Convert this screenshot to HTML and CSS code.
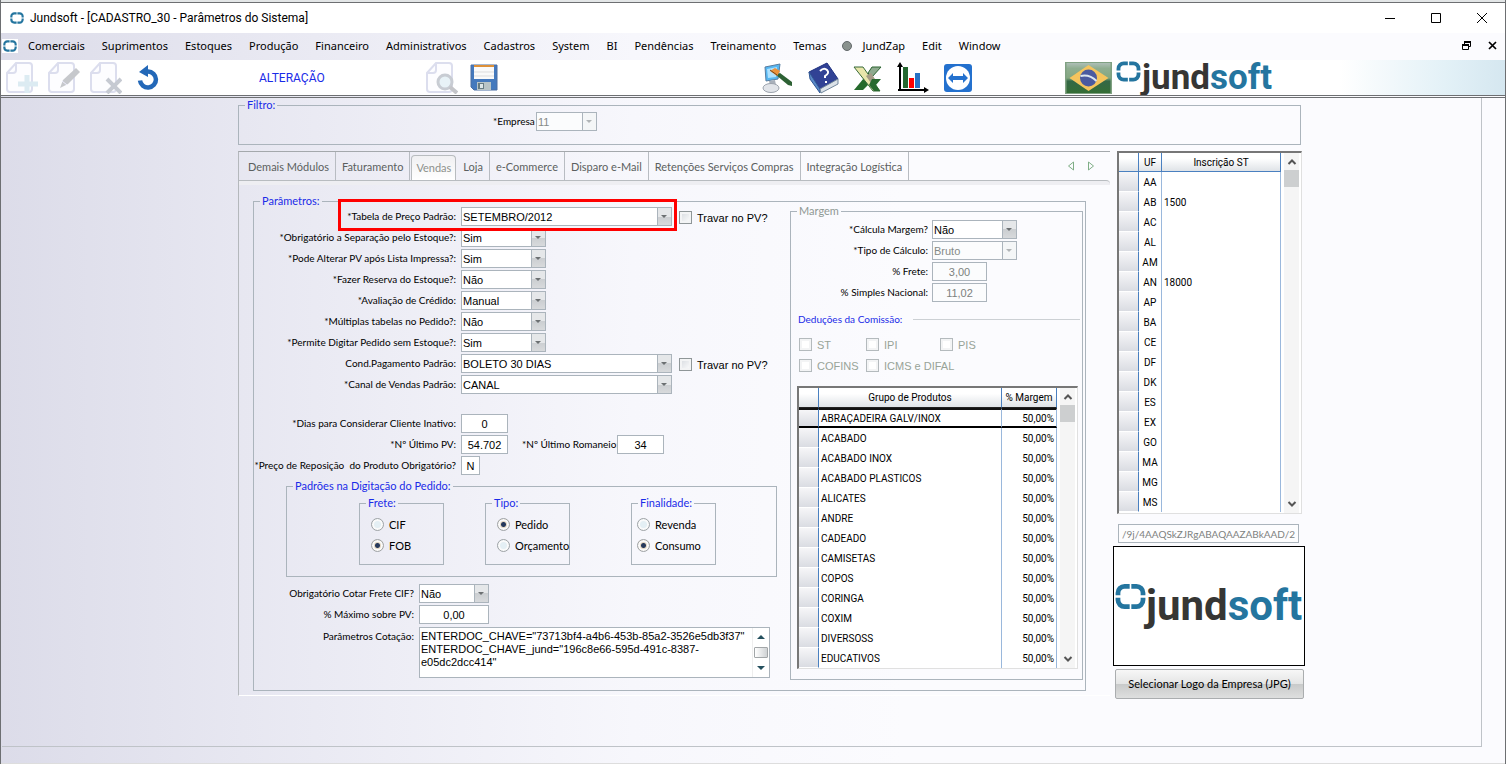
FILE: index.html
```html
<!DOCTYPE html>
<html lang="pt-BR">
<head>
<meta charset="utf-8">
<title>Jundsoft - [CADASTRO_30 - Parâmetros do Sistema]</title>
<link rel="stylesheet" href="styles.css">
</head>
<body>
<svg class="defs" aria-hidden="true">
  <defs>
    <symbol id="ring" viewBox="0 0 26 22"><path d="M2.500 10V8a5.500 5.500 0 0 1 5.500-5.500h4.300M13.700 2.500H18A5.500 5.500 0 0 1 23.500 8v2M23.500 12v2a5.500 5.500 0 0 1-5.500 5.500h-4.300M12.300 19.500H8A5.500 5.500 0 0 1 2.500 14v-2" fill="none" stroke="#24759f" stroke-width="4"/></symbol>
    <symbol id="page" viewBox="0 0 32 32"><path d="M10 1h13q3 0 3 3v23q0 3-3 3H4q-3 0-3-3V11zM10 2v6q0 3-3 3H2" fill="#fdfdff" stroke="#dcdeee" stroke-width="2"/></symbol>
    <symbol id="up" viewBox="0 0 10 10"><path d="M1.500 7L5 3.500L8.500 7" fill="none" stroke="#555" stroke-width="2"/></symbol>
    <symbol id="down" viewBox="0 0 10 10"><path d="M1.500 3L5 6.500L8.500 3" fill="none" stroke="#555" stroke-width="2"/></symbol>
  </defs>
</svg>
<div class="window">
  <div class="strip"></div>
  <header class="titlebar">
    <svg class="mark"><use href="#ring"/></svg>
    <h1>Jundsoft - [CADASTRO_30 - Parâmetros do Sistema]</h1>
    <button class="winbtn" aria-label="Minimizar"><svg width="12" height="12"><path d="M1 6.500h10" stroke="#000"/></svg></button>
    <button class="winbtn" aria-label="Maximizar"><svg width="12" height="12"><path d="M1.500 1.500h9v9h-9z" stroke="#000" fill="none"/></svg></button>
    <button class="winbtn" aria-label="Fechar"><svg width="12" height="12"><path d="M1 1l10 10M11 1L1 11" stroke="#000"/></svg></button>
  </header>
  <nav class="menubar">
    <svg class="mark boxed"><use href="#ring"/></svg>
    <button>Comerciais</button><button>Suprimentos</button><button>Estoques</button><button>Produção</button><button>Financeiro</button><button>Administrativos</button><button>Cadastros</button><button>System</button><button>BI</button><button>Pendências</button><button>Treinamento</button><button>Temas</button><button class="zap"><span class="dot"></span>JundZap</button><button>Edit</button><button>Window</button>
    <span class="grow"></span>
    <button class="mdi" aria-label="Restaurar"><svg width="9" height="9"><path d="M2.500 3V.5h6v5H6.500M.5 3.500h6v5h-6z" stroke="#000" fill="none"/><path d="M2 1h7M0 4h7" stroke="#000" stroke-width="2"/></svg></button>
    <button class="mdi" aria-label="Fechar documento"><svg width="9" height="9"><path d="M1 1l7 7M8 1L1 8" stroke="#000" stroke-width="1.700"/></svg></button>
  </nav>
  <div class="toolbar">
    <div class="group edit">
      <button aria-label="Novo" disabled><svg viewBox="0 0 32 32"><use href="#page"/><path d="M21 13v18M12 22h20" stroke="#dcebf2" stroke-width="5"/></svg></button>
      <button aria-label="Alterar" disabled><svg viewBox="0 0 32 32"><use href="#page"/><path d="M12 26l3-8L28 6l4 4-12 12z" fill="#c6c8cc"/><path d="M14 19l5 4" stroke="#eef"/></svg></button>
      <button aria-label="Excluir" disabled><svg viewBox="0 0 32 32"><use href="#page"/><path d="M17 17l14 14M31 17L17 31" stroke="#c6cad2" stroke-width="4"/></svg></button>
      <button aria-label="Desfazer"><svg viewBox="0 0 32 32"><path d="M8 18.500a8 8 0 1 0 8-9" fill="none" stroke="#2368b8" stroke-width="4.500"/><path d="M7 10l9-7v12z" fill="#2368b8"/></svg></button>
    </div>
    <span class="mode">ALTERAÇÃO</span>
    <div class="group save">
      <button aria-label="Pesquisar" disabled><svg viewBox="0 0 32 32"><use href="#page"/><circle cx="19" cy="20" r="7" fill="#e8f2f7" stroke="#c8ccd3" stroke-width="3"/><path d="M24 25l7 6" stroke="#c4c5c9" stroke-width="4"/></svg></button>
      <button aria-label="Salvar"><svg viewBox="0 0 32 32"><path d="M3 3h26v25H6l-3-3z" fill="#4479bd" stroke="#4b6fa3"/><path d="M6 3h20v14H6z" fill="#fafafa"/><path d="M6 3h20v2H6z" fill="#dd9038"/><path d="M6 10h20M6 14h20" stroke="#ddd"/><path d="M9 20h14v8H9z" fill="#b8c4c6"/><path d="M10 21h6v6h-6z" fill="#667b83"/><path d="M12 22h3v4h-3z" fill="#dce6e8"/></svg></button>
    </div>
    <div class="group apps">
      <button aria-label="Acesso"><svg viewBox="0 0 32 32"><path d="M3 5l15-3-2 15-12 2z" fill="#56b7f1" stroke="#597da0"/><path d="M5 7l10-2-1 10-8 1z" fill="#aee2ff"/><path d="M7 19l6-1 1 5-6 1z" fill="#a9b0ba"/><ellipse cx="9" cy="26" rx="8" ry="4.500" fill="#e1e4e9" stroke="#9ba2ac"/><path d="M14 13l4-2 12 9v4l-4-1z" fill="#2d6134"/><path d="M8 9l5-3 5 3-3 5z" fill="#ec923a"/><path d="M8 8l7 5" stroke="#71471e"/></svg></button>
      <button aria-label="Ajuda"><svg viewBox="0 0 32 32"><path d="M2 10L20 1l11 16-18 10z" fill="#314295" stroke="#1f3180"/><path d="M2 10l11 17v4L3 17z" fill="#5b89c8" stroke="#315794"/><path d="M13 27l18-10v5L14 31z" fill="#dce2e8" stroke="#71869b"/><path d="M13 9q4-4 7-1t-2 6v2M19 19v2" fill="none" stroke="#fff" stroke-width="2"/></svg></button>
      <button aria-label="Excel"><svg viewBox="0 0 32 32"><path d="M20 5h9l-9 10-4-4z" fill="#8fab8f" stroke="#2c6431"/><path d="M12 16l5 6-6 6H2z" fill="#256a2c"/><path d="M2 5h9l17 24h-7z" fill="#e9e6ab" stroke="#396b3a"/><path d="M14 14l5-3 4 6-4 4z" fill="#a49b86"/><path d="M20 17h9l-5 6 4 6h-6l-5-6z" fill="#29692f"/></svg></button>
      <button aria-label="Gráficos"><svg viewBox="0 0 32 32"><path d="M3 28V3M1 28h28" stroke="#000" stroke-width="2" fill="none"/><path d="M0 5l3-5 3 5M27 25l5 3-5 3z" fill="#000"/><path d="M6 5h5v21H6z" fill="#24672f"/><path d="M12 16h5v10h-5z" fill="#f00"/><path d="M18 11h5v15h-5z" fill="#2872c4"/></svg></button>
      <button aria-label="Suporte remoto"><svg viewBox="0 0 32 32"><rect x="2" y="2" width="28" height="28" rx="3" fill="#2471ce"/><circle cx="16" cy="16" r="12" fill="#fff"/><path d="M6 16l5-5v3h10v-3l5 5-5 5v-3H11v3z" fill="#2471ce"/></svg></button>
    </div>
    <svg class="flag" viewBox="0 0 46 32" role="img" aria-label="Brasil"><defs><linearGradient id="green" x2="0" y2="1"><stop stop-color="#b4c2bd"/><stop offset=".2" stop-color="#8fae90"/><stop offset=".5" stop-color="#84a780"/><stop offset=".6" stop-color="#346846"/><stop offset="1" stop-color="#356e35"/></linearGradient></defs><path d="M0 0h46v32H0z" fill="url(#green)" stroke="#80a182" stroke-width="2"/><path d="M4 16L23 3l20 13-20 13z" fill="#f5c45d"/><circle cx="23" cy="16" r="8.500" fill="#4a5aa0"/><path d="M15 14q9-2 16 5" stroke="#dce6ef" stroke-width="2" fill="none"/></svg>
    <div class="brand"><svg><use href="#ring"/></svg><span>jund<b>soft</b></span></div>
  </div>
  <main class="client">
    <div class="workspace">
      <fieldset class="filter"><legend>Filtro:</legend>
        <label for="empresa">*Empresa</label><span class="sel off"><select id="empresa" disabled><option>11</option></select></span>
      </fieldset>
      <div class="columns">
        <section class="panel">
          <div class="tabs" role="tablist">
            <button role="tab">Demais Módulos</button><button role="tab">Faturamento</button><button role="tab" class="active" aria-selected="true">Vendas</button><button role="tab">Loja</button><button role="tab">e-Commerce</button><button role="tab">Disparo e-Mail</button><button role="tab">Retenções Serviços Compras</button><button role="tab">Integração Logística</button>
            <span class="grow"></span>
            <button class="step" aria-label="Anterior"><svg width="8" height="10"><path d="M6.500 1v8L1.500 5z" fill="none" stroke="#7fae86"/></svg></button>
            <button class="step" aria-label="Próximo"><svg width="8" height="10"><path d="M1.500 1v8l5-4z" fill="none" stroke="#7fae86"/></svg></button>
          </div>
          <div class="tabedge"></div>
          <fieldset class="params"><legend>Parâmetros:</legend>
            <div class="split">
              <div class="left">
                <div class="row marked"><label for="p1">*Tabela de Preço Padrão:</label><span class="sel wide"><select id="p1"><option>SETEMBRO/2012</option></select></span><label class="check"><input type="checkbox">Travar no PV?</label></div>
                <div class="row"><label for="p2">*Obrigatório a Separação pelo Estoque?:</label><span class="sel"><select id="p2"><option>Sim</option></select></span></div>
                <div class="row"><label for="p3">*Pode Alterar PV após Lista Impressa?:</label><span class="sel"><select id="p3"><option>Sim</option></select></span></div>
                <div class="row"><label for="p4">*Fazer Reserva do Estoque?:</label><span class="sel"><select id="p4"><option>Não</option></select></span></div>
                <div class="row"><label for="p5">*Avaliação de Crédido:</label><span class="sel"><select id="p5"><option>Manual</option></select></span></div>
                <div class="row"><label for="p6">*Múltiplas tabelas no Pedido?:</label><span class="sel"><select id="p6"><option>Não</option></select></span></div>
                <div class="row"><label for="p7">*Permite Digitar Pedido sem Estoque?:</label><span class="sel"><select id="p7"><option>Sim</option></select></span></div>
                <div class="row"><label for="p8">Cond.Pagamento Padrão:</label><span class="sel wide"><select id="p8"><option>BOLETO 30 DIAS</option></select></span><label class="check"><input type="checkbox">Travar no PV?</label></div>
                <div class="row"><label for="p9">*Canal de Vendas Padrão:</label><span class="sel wide"><select id="p9"><option>CANAL</option></select></span></div>
                <div class="row spaced"><label for="n1">*Dias para Considerar Cliente Inativo:</label><input id="n1" class="num" value="0"></div>
                <div class="row"><label for="n2">*Nº Último PV:</label><input id="n2" class="num" value="54.702"><label class="second" for="n3">*Nº Último Romaneio:</label><input id="n3" class="num" value="34"></div>
                <div class="row"><label for="n4">*Preço de Reposição &nbsp;do Produto Obrigatório?</label><input id="n4" class="num tiny" value="N"></div>
                <fieldset class="defaults"><legend>Padrões na Digitação do Pedido:</legend>
                  <div class="choices">
                    <fieldset><legend>Frete:</legend><label><input type="radio" name="frete">CIF</label><label><input type="radio" name="frete" checked>FOB</label></fieldset>
                    <fieldset><legend>Tipo:</legend><label><input type="radio" name="tipo" checked>Pedido</label><label><input type="radio" name="tipo">Orçamento</label></fieldset>
                    <fieldset class="last"><legend>Finalidade:</legend><label><input type="radio" name="fin">Revenda</label><label><input type="radio" name="fin" checked>Consumo</label></fieldset>
                  </div>
                </fieldset>
                <div class="quote">
                  <div class="row"><label for="q1">Obrigatório Cotar Frete CIF?</label><span class="sel"><select id="q1"><option>Não</option></select></span></div>
                  <div class="row"><label for="q2">% Máximo sobre PV:</label><input id="q2" class="num" value="0,00"></div>
                  <div class="row area"><label for="q3">Parâmetros Cotação:</label><div class="memo"><textarea id="q3">ENTERDOC_CHAVE="73713bf4-a4b6-453b-85a2-3526e5db3f37"
ENTERDOC_CHAVE_jund="196c8e66-595d-491c-8387-e05dc2dcc414"</textarea><div class="memobar"><i class="tri"></i><i class="grip"></i><i class="tri flip"></i></div></div></div>
                </div>
              </div>
              <fieldset class="margin"><legend>Margem</legend>
                <div class="row"><label for="m1">*Cálcula Margem?</label><span class="sel"><select id="m1"><option>Não</option></select></span></div>
                <div class="row"><label for="m2">*Tipo de Cálculo:</label><span class="sel off"><select id="m2" disabled><option>Bruto</option></select></span></div>
                <div class="row"><label for="m3">% Frete:</label><input id="m3" class="num" value="3,00" disabled></div>
                <div class="row"><label for="m4">% Simples Nacional:</label><input id="m4" class="num" value="11,02" disabled></div>
                <div class="rule"><span>Deduções da Comissão:</span></div>
                <div class="taxes"><label class="check"><input type="checkbox" disabled>ST</label><label class="check"><input type="checkbox" disabled>IPI</label><label class="check"><input type="checkbox" disabled>PIS</label><label class="check"><input type="checkbox" disabled>COFINS</label><label class="check long"><input type="checkbox" disabled>ICMS e DIFAL</label></div>
                <div class="gridbox">
                  <table class="groups">
                    <thead><tr><th class="pick"></th><th>Grupo de Produtos</th><th class="pct">% Margem</th></tr></thead>
                    <tbody>
                      <tr class="current"><td></td><td>ABRAÇADEIRA GALV/INOX</td><td>50,00%</td></tr>
                      <tr><td></td><td>ACABADO</td><td>50,00%</td></tr>
                      <tr><td></td><td>ACABADO INOX</td><td>50,00%</td></tr>
                      <tr><td></td><td>ACABADO PLASTICOS</td><td>50,00%</td></tr>
                      <tr><td></td><td>ALICATES</td><td>50,00%</td></tr>
                      <tr><td></td><td>ANDRE</td><td>50,00%</td></tr>
                      <tr><td></td><td>CADEADO</td><td>50,00%</td></tr>
                      <tr><td></td><td>CAMISETAS</td><td>50,00%</td></tr>
                      <tr><td></td><td>COPOS</td><td>50,00%</td></tr>
                      <tr><td></td><td>CORINGA</td><td>50,00%</td></tr>
                      <tr><td></td><td>COXIM</td><td>50,00%</td></tr>
                      <tr><td></td><td>DIVERSOSS</td><td>50,00%</td></tr>
                      <tr><td></td><td>EDUCATIVOS</td><td>50,00%</td></tr>
                    </tbody>
                  </table>
                  <div class="bar"><svg><use href="#up"/></svg><i></i><svg><use href="#down"/></svg></div>
                </div>
              </fieldset>
            </div>
          </fieldset>
        </section>
        <aside class="side">
          <div class="gridbox">
            <table class="states">
              <thead><tr><th class="pick"></th><th class="uf">UF</th><th>Inscrição ST</th></tr></thead>
              <tbody>
                <tr><td></td><td>AA</td><td></td></tr>
                <tr><td></td><td>AB</td><td>1500</td></tr>
                <tr><td></td><td>AC</td><td></td></tr>
                <tr><td></td><td>AL</td><td></td></tr>
                <tr><td></td><td>AM</td><td></td></tr>
                <tr><td></td><td>AN</td><td>18000</td></tr>
                <tr><td></td><td>AP</td><td></td></tr>
                <tr><td></td><td>BA</td><td></td></tr>
                <tr><td></td><td>CE</td><td></td></tr>
                <tr><td></td><td>DF</td><td></td></tr>
                <tr><td></td><td>DK</td><td></td></tr>
                <tr><td></td><td>ES</td><td></td></tr>
                <tr><td></td><td>EX</td><td></td></tr>
                <tr><td></td><td>GO</td><td></td></tr>
                <tr><td></td><td>MA</td><td></td></tr>
                <tr><td></td><td>MG</td><td></td></tr>
                <tr><td></td><td>MS</td><td></td></tr>
              </tbody>
            </table>
            <div class="bar"><svg><use href="#up"/></svg><i></i><svg><use href="#down"/></svg></div>
          </div>
          <input class="blob" aria-label="Conteúdo do logo" value="/9j/4AAQSkZJRgABAQAAZABkAAD/2wCEAAUD" disabled>
          <div class="logobox"><div class="brand big"><svg><use href="#ring"/></svg><span>jund<b>soft</b></span></div></div>
          <button class="pickbtn">Selecionar Logo da Empresa (JPG)</button>
        </aside>
      </div>
    </div>
  </main>
</div>
</body>
</html>
```

FILE: styles.css
```css
*, *::before, *::after { box-sizing: border-box; }
body { margin: 0; font: 11px/12px "Liberation Sans", Arial, sans-serif; color: #000; }
button, input, select, textarea { font: inherit; color: inherit; margin: 0; }
button { border: 0; background: none; padding: 0; }
fieldset { margin: 0; padding: 0; border: 1px solid #abb4bc; min-width: 0; }
legend { color: #1a2be8; padding: 0 2px; margin-left: 6px; font-family: Lato, sans-serif; }
.defs { position: absolute; width: 0; height: 0; }
.grow { flex: 1; }

.window { min-height: 100vh; display: flex; flex-direction: column; border-left: 1px solid #6d6f72; border-right: 1px solid #6d6f72; background: linear-gradient(90deg, #dcdce9, #e7e7f1 16%, #f7f7fc 42%, #fbfbfe 60%); }
.strip { height: 3px; background: #e3e6e7; border-bottom: 1px solid #6d6f72; }

.titlebar { display: flex; align-items: center; height: 30px; background: #fff; padding: 0 0 0 9px; }
.titlebar h1 { flex: 1; margin: 0 0 0 6px; font: 12px/16px Roboto, sans-serif; }
.mark { width: 14px; height: 12px; }
.winbtn { width: 46px; height: 28px; display: grid; place-items: center; }

.menubar { display: flex; align-items: center; gap: 17px; height: 27px; padding: 0 8px 2px 1px; font: 11px/16px "Noto Sans", sans-serif; }
.mark.boxed { width: 16px; height: 14px; padding: 1px; background: #fff; margin-right: -7px; }
.zap { display: flex; align-items: center; gap: 11px; margin-left: -2px; }
.dot { width: 10px; height: 10px; border-radius: 50%; background: #8a928e; border: 1px solid #62686a; }
.mdi { display: flex; }

.toolbar { display: flex; align-items: center; height: 35px; padding-left: 5px; background: linear-gradient(90deg, #fff 89%, #e3f1f7 96%, #d5e7f0); }
.group { display: flex; gap: 10px; }
.group button { width: 32px; height: 32px; }
.group svg { width: 32px; height: 32px; }
.mode { width: 64px; color: #1a2be8; font-family: Roboto, sans-serif; font-size: 12px; margin: 0 103px 0 95px; }
.save { gap: 10px; }
.apps { gap: 13px; margin-left: 262px; }
.flag { width: 47px; height: 32px; margin: 0 3px 0 91px; }
.brand { display: flex; align-items: flex-start; height: 34px; }
.brand svg { width: 27px; height: 21px; flex: none; }
.brand span { font: 700 35px/34px Roboto, sans-serif; color: #363634; }
.brand b { font-weight: 700; color: #24759f; }

.client { flex: 1; border-top: 3px double #6d6f72; padding: 0 23px 15px 1px; border-bottom: 1px solid #ddd; }
.workspace { min-height: 649px; padding: 1px 176px 0 236px; border-right: 1px solid #bfc3c8; border-bottom: 1px solid #bfc3c8; }
.filter { height: 46px; margin: 0 4px 0 0; display: flex; padding: 1px 0 0 254px; gap: 1px; }
.filter legend { margin-left: -248px; }
.filter label { line-height: 19px; padding-right: 1px; width: 42px; }
.filter .sel { width: 61px; }
.columns { display: grid; grid-template-columns: minmax(0, 1fr) 192px; gap: 3px; margin-top: 6px; }

.panel { border-top: 1px solid #a4a8ac; border-left: 1px solid #b4b8bc; border-bottom: 1px solid #fff; height: 545px; }
.tabs { display: flex; align-items: center; height: 28px; padding: 0 9px 0 3px; color: #5b5f60; font-family: Lato, sans-serif; }
.tabs button { height: 28px; padding: 2px 6px 0 6px; border-right: 1px solid #b8bcc2; }
.tabs .active { height: 25px; margin: 3px 1px 0; padding: 0 4px; border: 1px solid #b8bcbf; border-bottom: 0; border-radius: 4px 4px 0 0; color: #8d918c; background: linear-gradient(#f0f0f2, #fff); }
.tabs .step { border: 0; }
.tabedge { height: 5px; border-top: 1px solid #b8bcc0; border-radius: 0 4px 0 0; background: #eeeef2; }

label { font-family: Lato, sans-serif; font-size: 10px; }
.params { margin: 10px 24px 0 14px; height: 496px; }
.split { display: grid; grid-template-columns: minmax(0, 1fr) 293px; gap: 13px; padding-right: 2px; }
.row { display: flex; align-items: flex-start; height: 21px; gap: 5px; position: relative; }
.row > label:first-child { width: 202px; text-align: right; line-height: 19px; white-space: pre; flex: none; }
.marked::after { content: ""; position: absolute; left: 84px; top: -8px; width: 339px; height: 32px; border: 3px solid #f00; pointer-events: none; z-index: 1; }
.spaced { margin-top: 18px; }

.sel { position: relative; display: block; width: 85px; height: 19px; flex: none; }
.sel select { display: block; appearance: none; width: 100%; height: 19px; padding: 0 16px 0 1px; border: 1px solid #abb4bc; border-radius: 0; background: #fff; opacity: 1; }
.sel::before { content: ""; position: absolute; right: 1px; top: 1px; width: 14px; height: 17px; background: linear-gradient(#e5e7e9 50%, #cbced1 50%, #d8dadc); border-left: 1px solid #abb4bc; pointer-events: none; }
.sel::after { content: ""; position: absolute; right: 5px; top: 8px; border: 3px solid transparent; border-top-color: #6c7072; border-bottom: 0; pointer-events: none; }
.sel.wide { width: 211px; }
.sel.off select { color: #858a87; background: #fbfcfd; }
.sel.off::before { background: #f4f6f7; }
.sel.off::after { border-top-color: #b0b4b6; }
.num { width: 47px; height: 19px; border: 1px solid #abb4bc; padding: 0; text-align: center; background: #fff; }
.num:disabled { color: #7d827e; background: #fbfcfd; }
.num.tiny { width: 19px; }
.second { width: 90px; margin-left: 9px; line-height: 19px; white-space: nowrap; }
.check { display: flex; align-items: center; gap: 5px; height: 21px; font-family: "Liberation Sans", sans-serif; font-size: 11px; }
.left .check { margin-left: 2px; }
.check input { appearance: none; width: 13px; height: 13px; border: 1px solid #8f9698; background: linear-gradient(135deg, #d5d9de, #fff); box-shadow: inset 0 0 0 2px #f3f4f5; }

.defaults { margin: 3px 0 0 32px; height: 97px; }
.choices { display: grid; grid-template-columns: 85px 85px 85px; column-gap: 41px; padding: 5px 0 0 72px; }
.choices .last { margin-left: 20px; width: 85px; }
.choices fieldset { height: 68px; padding-left: 4px; }
.choices legend { margin-left: 2px; }
.choices label { display: flex; align-items: center; gap: 5px; height: 21px; padding-left: 7px; font-size: 11px; white-space: nowrap; }
.choices .last label { padding-left: 1px; }
.choices legend + label { margin-top: 5px; }
.choices input { appearance: none; width: 13px; height: 13px; flex: none; border: 1px solid #9fa3a6; border-radius: 50%; background: #e4eff4; box-shadow: inset 0 0 0 2px #fafafa; }
.choices input:checked { background: radial-gradient(circle, #273a5c 2px, #e4d6c0 3px); }

.quote { margin-top: 7px; }
.quote .row > label:first-child { width: 160px; }
.quote .sel, .quote .num { width: 70px; }
.quote .area { height: 51px; margin-top: 1px; }
.memo { flex: 1; display: flex; height: 51px; margin-right: 7px; border: 1px solid #abb4bc; background: #fff; }
.memo textarea { flex: 1; min-width: 0; border: 0; padding: 2px 0 0 1px; line-height: 13px; resize: none; overflow: hidden; background: none; outline: 0; }
.memobar { width: 17px; display: flex; flex-direction: column; align-items: center; justify-content: space-between; padding: 7px 0; border-left: 1px solid #eee; }
.tri { border: 4px solid transparent; border-bottom-color: #24505e; border-top: 0; }
.tri.flip { transform: rotate(180deg); }
.grip { width: 14px; height: 11px; border: 1px solid #a2a6a8; border-radius: 1px; background: linear-gradient(90deg, #fff, #cfd2d4); }

.margin { height: 475px; margin-top: -2px; padding: 3px 4px 0 0; }
.margin legend { color: #8f9894; }
.margin .row { gap: 4px; }
.margin .row > label:first-child { width: 137px; }
.margin .num { width: 55px; }
.rule { display: flex; align-items: center; gap: 11px; margin: 9px 0 0 7px; color: #1a2be8; font-family: Lato, sans-serif; font-size: 10px; }
.rule::after { content: ""; flex: 1; margin-right: -2px; height: 1px; background: #ccd0d4; }
.taxes { display: grid; grid-template-columns: 67px 74px 1fr; margin: 9px 0 0 8px; color: #98a398; }
.taxes .long { grid-column: span 2; }
.taxes .check input { border-color: #b4babd; background: #fff; }

.gridbox { display: flex; border: 1px solid #e0e0e0; border-top: 2px solid #777; border-left: 2px solid #777; background: #fff; overflow: hidden; }
.margin .gridbox { margin: 10px 0 0 6px; height: 283px; }
table { flex: 1; border-collapse: separate; border-spacing: 0; table-layout: fixed; width: 0; font-family: Roboto, sans-serif; font-size: 10px; align-self: flex-start; }
th, td { height: 20px; padding: 1px 2px 0; border-right: 1px solid #9ab8dc; white-space: nowrap; text-align: left; font-weight: normal; overflow: hidden; }
th { height: 19px; text-align: center; background: linear-gradient(#fff 30%, #dfe3e7); border-right-color: #4a80c0; border-bottom: 1px solid #4a80c0; }
.pick { width: 20px; }
td:first-child { background: linear-gradient(#f6f6f8, #dadce2); border-right: 1px solid #4a80c0; border-bottom: 1px solid #fff; }
.pct { width: 55px; }
.groups td:last-child { text-align: right; }
.groups th { height: 20px; border-bottom: 1px solid #222; }
.current td { border-top: 2px solid #111; border-bottom: 2px solid #000; }
.uf { width: 23px; }
.states td:nth-child(2) { text-align: center; }
.bar { width: 15px; margin: 0 2px 0 3px; background: #f5f5f5; display: flex; flex-direction: column; align-items: center; padding: 4px 0; }
.bar svg { width: 10px; height: 10px; }
.bar i { width: 15px; height: 17px; margin: 3px 0 auto; background: #cdcfd0; }

.side { display: flex; flex-direction: column; }
.side .gridbox { margin: 0 3px 0 4px; height: 363px; }
.blob { height: 19px; margin: 10px 6px 0 5px; padding: 0 3px; border: 1px solid #abb4bc; background: #fdfdfe; color: #7d827e; font-family: Lato, sans-serif; font-size: 10px; }
.logobox { height: 120px; margin-top: 3px; border: 1px solid #000; background: #fff; display: flex; align-items: center; overflow: hidden; }
.brand.big { height: 46px; padding-left: 1px; }
.brand.big svg { width: 31px; height: 27px; }
.brand.big span { font-size: 42px; line-height: 46px; }
.pickbtn { height: 30px; margin: 3px 1px 0 2px; border: 1px solid #aaadaf; border-radius: 2px; background: linear-gradient(#f7f7f7, #e4e5e5 49%, #c8caca 50%, #dedfdf); font-family: Lato, sans-serif; }
```
